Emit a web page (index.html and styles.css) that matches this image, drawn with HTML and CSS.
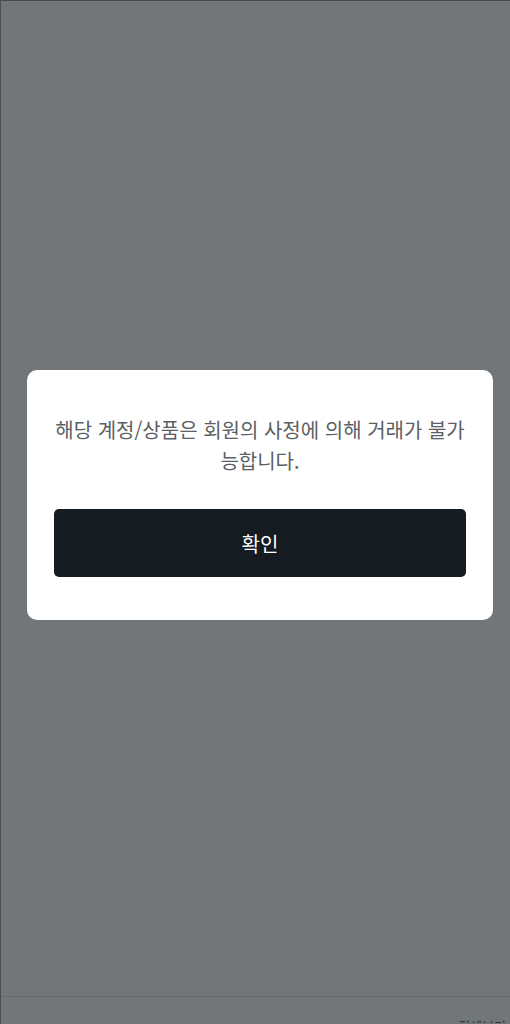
FILE: index.html
```html
<!DOCTYPE html>
<html lang="ko">
<head>
<meta charset="utf-8">
<link rel="stylesheet" href="styles.css">
</head>
<body>
<div class="screen">
  <div class="stage">
    <div class="modal">
      <p class="message">해당 계정/상품은 회원의 사정에 의해 거래가 불가능합니다.</p>
      <button class="confirm">확인</button>
    </div>
  </div>
  <div class="bottombar"><span class="bottomtext">전체보기</span></div>
</div>
</body>
</html>
```
FILE: styles.css
```css
html, body {
  margin: 0;
  padding: 0;
  height: 100%;
}
body {
  font-family: "Noto Sans CJK KR", "Noto Sans", sans-serif;
  background: #727678;
  overflow: hidden;
}
.screen {
  height: 1024px;
  box-sizing: border-box;
  border-top: 1px solid #454a4d;
  border-left: 1px solid #4a4f52;
  display: flex;
  flex-direction: column;
  overflow: hidden;
}
.stage {
  height: 995px;
  flex-shrink: 0;
  display: flex;
  align-items: center;
  justify-content: flex-start;
  padding: 0 0 7px 26px;
  box-sizing: border-box;
}
.modal {
  width: 466px;
  height: 250px;
  box-sizing: border-box;
  background: #ffffff;
  border-radius: 10px;
  padding: 44px 27px 0;
}
.message {
  margin: 0;
  font-size: 20px;
  line-height: 31px;
  color: #5b6065;
  text-align: center;
}
.confirm {
  display: block;
  margin-top: 33px;
  width: 100%;
  height: 68px;
  border: none;
  border-radius: 5px;
  background: #161b21;
  color: #ffffff;
  font-family: "Noto Sans CJK KR", "Noto Sans", sans-serif;
  font-size: 20px;
}
.bottombar {
  border-top: 1px solid #686c6f;
  height: 27px;
  flex-shrink: 0;
  overflow: hidden;
  display: flex;
  justify-content: flex-end;
  padding: 21px 4px 0 0;
  box-sizing: border-box;
}
.bottomtext {
  font-size: 13px;
  line-height: 16px;
  color: #2e3236;
  flex-shrink: 0;
}
```
